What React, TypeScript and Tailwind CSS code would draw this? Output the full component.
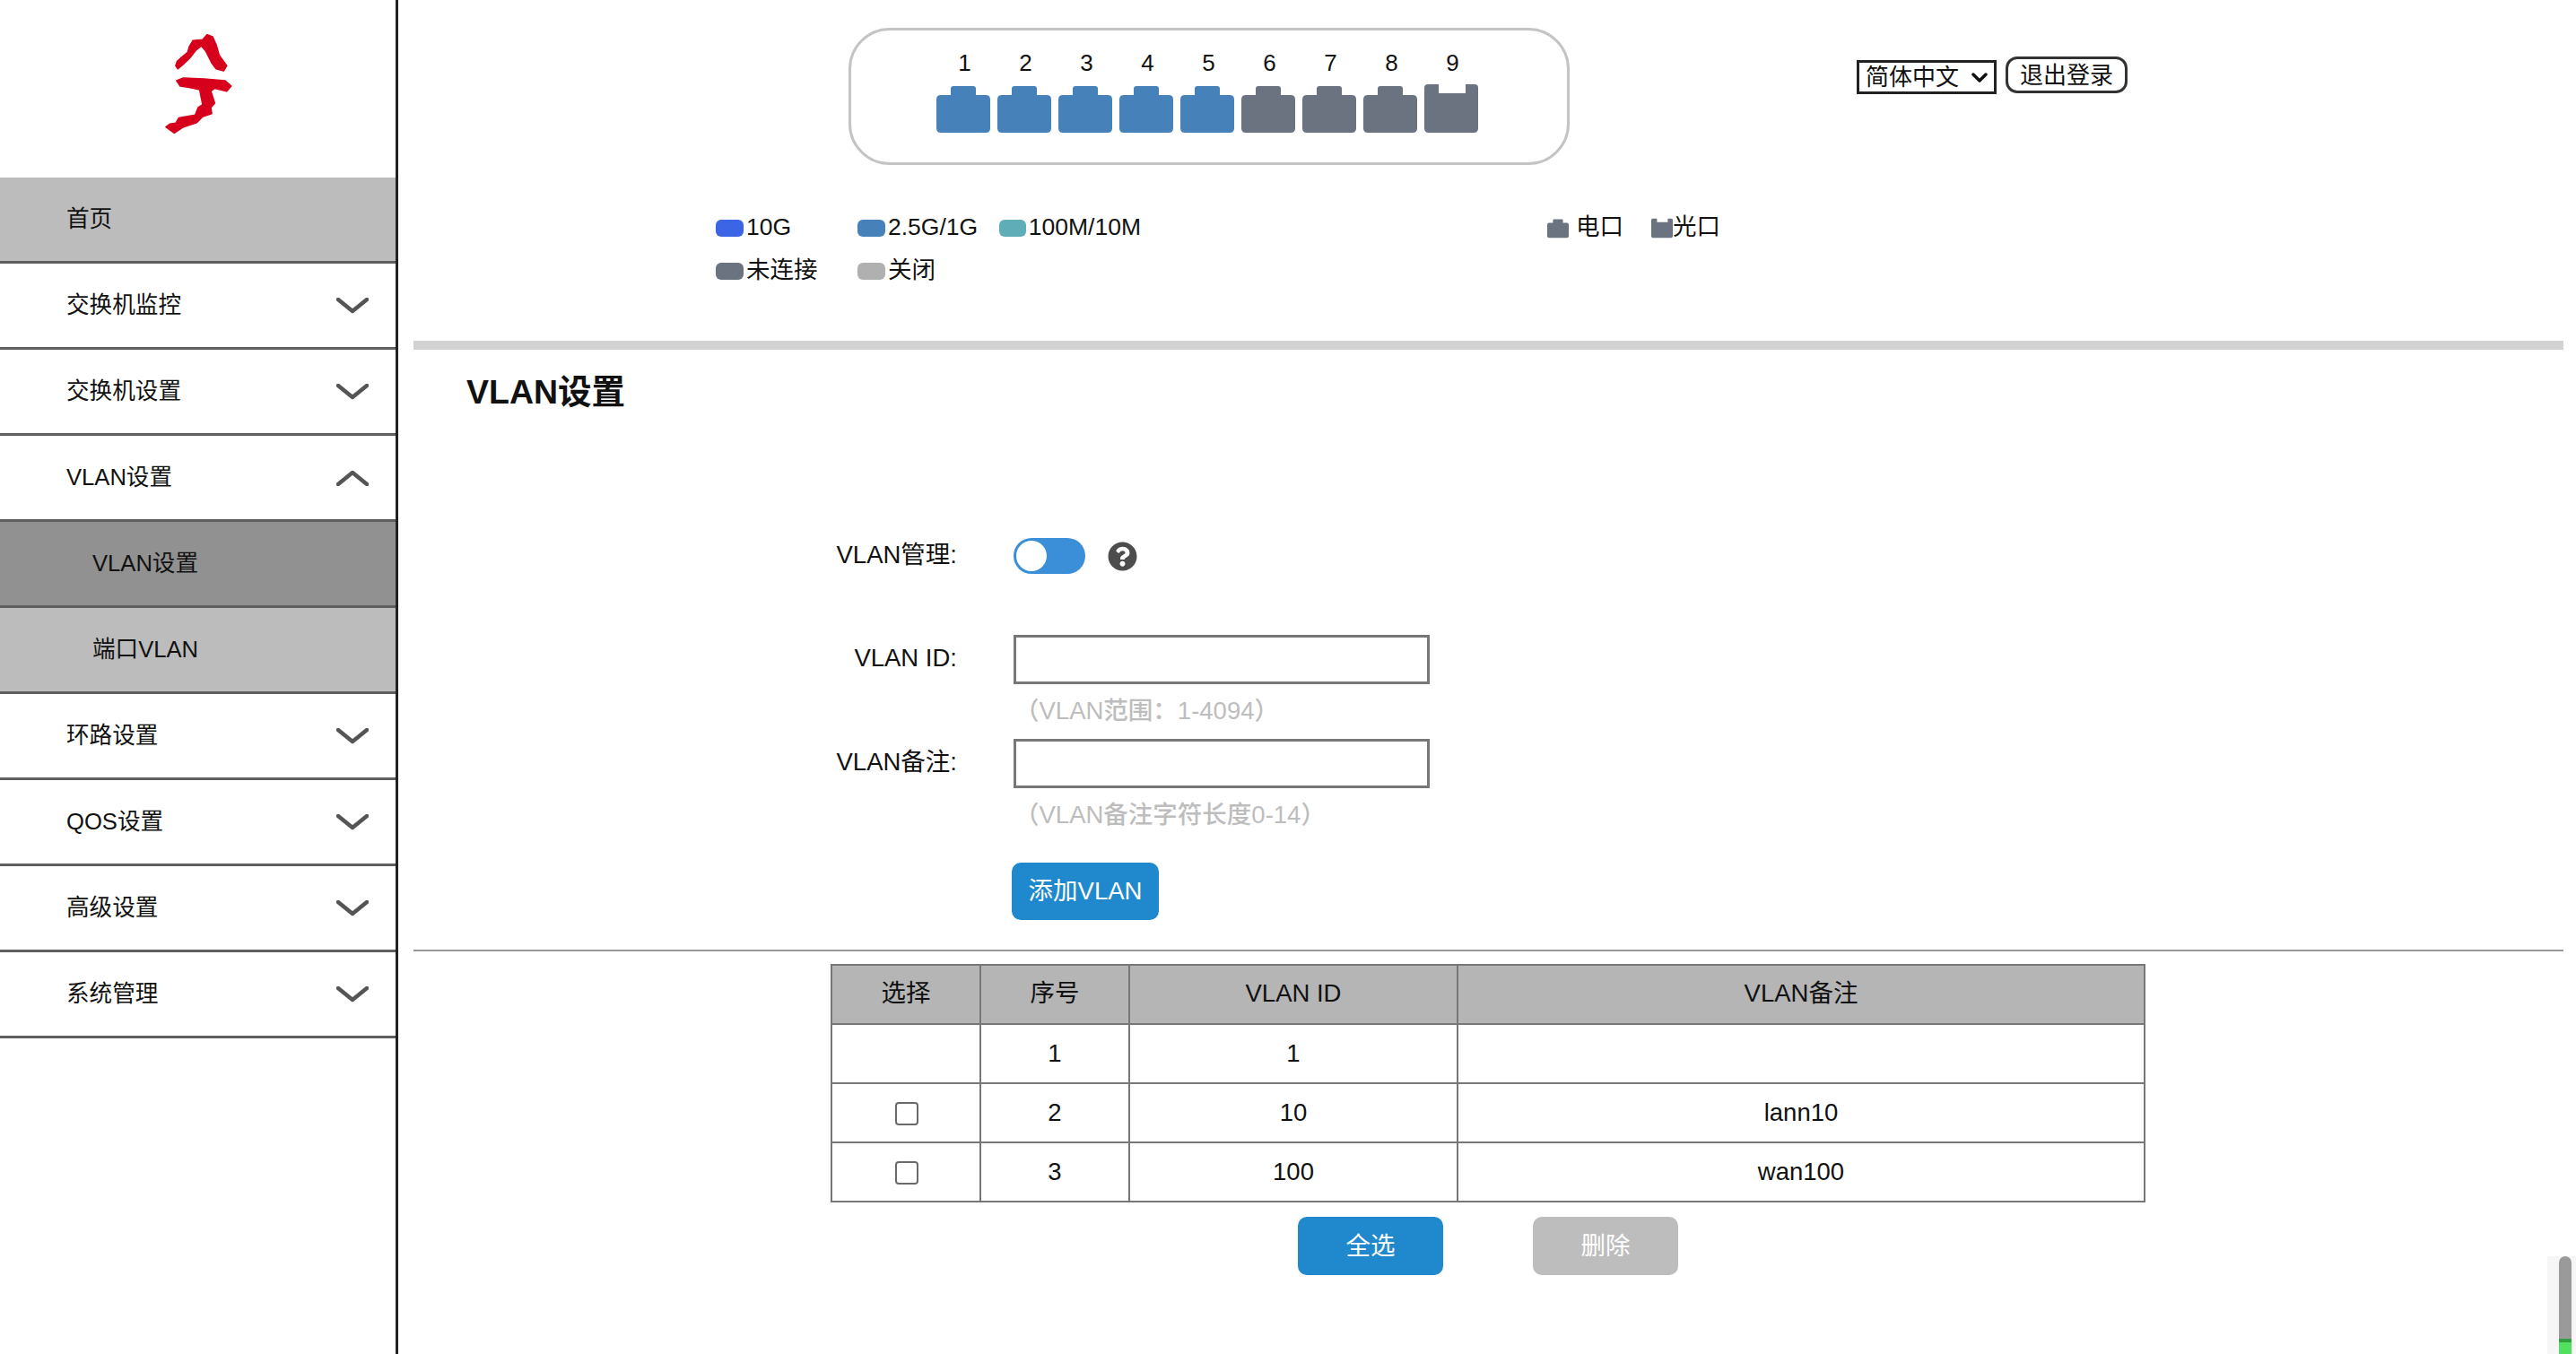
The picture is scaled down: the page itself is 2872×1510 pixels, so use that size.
import { FaQuestionCircle } from "react-icons/fa"

const menu = [
  { label: "首页", home: true },
  { label: "交换机监控" },
  { label: "交换机设置" },
  { label: "VLAN设置", open: true },
  { label: "VLAN设置", sub: true, active: true },
  { label: "端口VLAN", sub: true },
  { label: "环路设置" },
  { label: "QOS设置" },
  { label: "高级设置" },
  { label: "系统管理" },
]

const ports = [1, 2, 3, 4, 5, 6, 7, 8, 9]

const vlans = [
  { no: 1, id: 1, note: "", locked: true },
  { no: 2, id: 10, note: "lann10" },
  { no: 3, id: 100, note: "wan100" },
]

function Logo() {
  return (
    <svg width="120" height="140" viewBox="0 0 360 420" fill="#d6001c" stroke="#d6001c" strokeWidth="5" strokeLinejoin="round">
      <path d="M105 160 L110 145 L125 132 L145 115 L150 97 L162 76 L195 73 L210 56 L228 63 L240 90 L250 125 L275 160 L265 177 L240 170 L225 150 L205 110 L190 93 L170 110 L155 130 L130 155 L112 170 Z" />
      <path d="M108 210 L130 201 L200 204 L270 210 L290 228 L275 245 L235 235 L222 245 L235 285 L222 300 L225 320 L195 330 L175 350 L130 365 L100 385 L72 365 L85 355 L105 352 L115 335 L170 325 L180 300 L195 290 L185 240 L150 232 L120 228 Z" />
    </svg>
  )
}

function Chevron({ up }: { up?: boolean }) {
  return (
    <svg width="36" height="18" viewBox="0 0 36 18" fill="none" stroke="#555555" strokeWidth="4.5" strokeLinecap="round" strokeLinejoin="round">
      <path d={up ? "M2 16 L18 3 L34 16" : "M2 2 L18 15 L34 2"} />
    </svg>
  )
}

function CopperPort({ color, className }: { color: string; className: string }) {
  return (
    <svg className={className} viewBox="0 0 60 54" fill={color}>
      <path d="M19 2 H41 Q44 2 44 5 V12 H55 Q60 12 60 17 V49 Q60 54 55 54 H5 Q0 54 0 49 V17 Q0 12 5 12 H16 V5 Q16 2 19 2 Z" />
    </svg>
  )
}

function FiberPort({ color, className }: { color: string; className: string }) {
  return (
    <svg className={className} viewBox="0 0 60 54" fill={color}>
      <path d="M4 0 H16 V10 H46 V0 H56 Q60 0 60 4 V49 Q60 54 55 54 H5 Q0 54 0 49 V4 Q0 0 4 0 Z" />
    </svg>
  )
}

function Swatch({ color, label }: { color: string; label: string }) {
  return (
    <div className="flex items-center gap-[3px]">
      <span className="h-[19px] w-[31px] rounded-[6px]" style={{ backgroundColor: color }} />
      <span>{label}</span>
    </div>
  )
}

function Sidebar() {
  return (
    <aside className="flex h-full w-[444px] shrink-0 flex-col border-r-[3px] border-[#222222] text-[25.6px] text-[#111111]">
      <div className="flex h-[198px] justify-center pt-[20px]">
        <Logo />
      </div>
      {menu.map((item, i) => (
        <div
          key={i}
          className={`flex h-[96px] items-center justify-between border-b-[3px] border-[#5f5f5f] pr-[30px] ${
            item.sub ? "pl-[103px]" : "pl-[74px]"
          } ${item.active ? "bg-[#919191]" : item.sub || item.home ? "bg-[#bcbcbc]" : "bg-white"}`}
        >
          <span>{item.label}</span>
          {!item.sub && !item.home && <Chevron up={item.open} />}
        </div>
      ))}
    </aside>
  )
}

function Header() {
  return (
    <div className="h-[380px]">
      <div className="flex items-start pl-[485px] pt-[31px]">
        <div className="h-[153px] w-[804px] rounded-[46px] border-[3px] border-[#c4c4c4] pl-[95px] pt-[21px]">
          <div className="flex gap-[8px]">
            {ports.map((p) => (
              <div key={p} className="flex w-[60px] flex-col items-center">
                <span className="h-[30px] pl-[3px] text-[26px] leading-[30px]">{p}</span>
                <div className="mt-[9px]">
                  {p === 9 ? (
                    <FiberPort color="#6b7280" className="h-[54px] w-[60px]" />
                  ) : (
                    <CopperPort color={p <= 5 ? "#4682b9" : "#6b7280"} className="h-[54px] w-[60px]" />
                  )}
                </div>
              </div>
            ))}
          </div>
        </div>
        <div className="relative ml-[320px] mt-[36px]">
          <select className="h-[38px] w-[156px] appearance-none border-[3px] border-[#222222] bg-white pl-[7px] text-[26px] leading-none">
            <option>简体中文</option>
          </select>
          <svg className="pointer-events-none absolute right-[10px] top-[14px]" width="18" height="11" viewBox="0 0 18 11" fill="none" stroke="#111111" strokeWidth="3.5" strokeLinecap="round" strokeLinejoin="round">
            <path d="M2 2 L9 9 L16 2" />
          </svg>
        </div>
        <button className="ml-[10px] mt-[32px] h-[41px] w-[136px] rounded-[13px] border-[3px] border-[#333333] bg-white text-[26px] leading-none">
          退出登录
        </button>
      </div>
      <div className="ml-[337px] mt-[46px] flex text-[26.5px]">
        <div className="grid w-[927px] grid-cols-[158px_158px_158px] auto-rows-[48px] items-center">
          <Swatch color="#3c65e6" label="10G" />
          <Swatch color="#4682b9" label="2.5G/1G" />
          <Swatch color="#5fadb6" label="100M/10M" />
          <Swatch color="#6b7280" label="未连接" />
          <Swatch color="#b0b0b0" label="关闭" />
        </div>
        <div className="flex h-[48px] items-center">
          <CopperPort color="#6b7280" className="h-[23px] w-[24px]" />
          <span className="ml-[8px]">电口</span>
          <FiberPort color="#6b7280" className="ml-[31px] h-[23px] w-[24px]" />
          <span>光口</span>
        </div>
      </div>
    </div>
  )
}

function Field({ label, hint }: { label: string; hint: string }) {
  return (
    <>
      <div className="flex h-[55px] items-center">
        <label className="w-[606px] pb-[4px] text-right">{label}</label>
        <input className="ml-[63px] h-[55px] w-[464px] border-[3px] border-[#777777] bg-white" />
      </div>
      <div className="ml-[670px] mt-[15px] h-[30px] font-medium leading-[30px] text-[#bdbdbd]">{hint}</div>
    </>
  )
}

function VlanForm() {
  return (
    <div className="text-[27.5px] text-[#111111]">
      <div className="mt-[140px] flex h-[40px] items-center">
        <label className="w-[606px] pb-[2px] text-right">VLAN管理:</label>
        <div className="ml-[63px] flex h-[40px] w-[80px] items-center rounded-full bg-[#3b8ed8] pl-[3px]">
          <span className="h-[34px] w-[34px] rounded-full bg-white" />
        </div>
        <FaQuestionCircle className="ml-[25px] text-[33px] text-[#4d4d4d]" />
      </div>
      <div className="mt-[68px]">
        <Field label="VLAN ID:" hint="（VLAN范围：1-4094）" />
      </div>
      <div className="mt-[16px]">
        <Field label="VLAN备注:" hint="（VLAN备注字符长度0-14）" />
      </div>
      <button className="ml-[667px] mt-[38px] h-[64px] w-[164px] rounded-[10px] bg-[#2089cd] text-white">添加VLAN</button>
    </div>
  )
}

function VlanTable() {
  const cell = "border-2 border-[#777777] text-center font-normal"
  return (
    <div className="ml-[465px] mt-[14px] text-[27.5px] text-[#111111]">
      <table className="w-[1464px] table-fixed border-collapse">
        <colgroup>
          <col className="w-[166px]" />
          <col className="w-[166px]" />
          <col className="w-[366px]" />
          <col className="w-[766px]" />
        </colgroup>
        <thead>
          <tr className="h-[66px] bg-[#b5b5b5]">
            <th className={cell}>
              <span className="block pb-[2px]">选择</span>
            </th>
            <th className={cell}>
              <span className="block pb-[2px]">序号</span>
            </th>
            <th className={cell}>
              <span className="block pb-[2px]">VLAN ID</span>
            </th>
            <th className={cell}>
              <span className="block pb-[2px]">VLAN备注</span>
            </th>
          </tr>
        </thead>
        <tbody>
          {vlans.map((v) => (
            <tr key={v.no} className="h-[66px]">
              <td className={cell}>
                {!v.locked && (
                  <input
                    type="checkbox"
                    className="mb-[3px] ml-[2px] h-[26px] w-[26px] appearance-none rounded-[4px] border-2 border-[#6a6a6a] bg-white align-middle"
                  />
                )}
              </td>
              <td className={cell}>{v.no}</td>
              <td className={cell}>{v.id}</td>
              <td className={cell}>{v.note}</td>
            </tr>
          ))}
        </tbody>
      </table>
      <div className="ml-[521px] mt-[16px] flex gap-[100px]">
        <button className="h-[65px] w-[162px] rounded-[10px] bg-[#2089cd] text-white">全选</button>
        <button className="h-[65px] w-[162px] rounded-[10px] bg-[#bdbdbd] text-white">删除</button>
      </div>
    </div>
  )
}

export default function App() {
  return (
    <div className="relative flex h-[1510px] overflow-hidden bg-white font-['Liberation_Sans','Noto_Sans_CJK_SC',sans-serif] text-[#111111]">
      <Sidebar />
      <main className="flex-1 pl-[17px] pr-[14px]">
        <Header />
        <div className="h-[10px] bg-[#d2d2d2]" />
        <h1 className="ml-[59px] mt-[24px] h-[46px] text-[37.5px] font-bold leading-[46px]">VLAN设置</h1>
        <VlanForm />
        <div className="mt-[33px] h-[2px] bg-[#999999]" />
        <VlanTable />
      </main>
      <div className="absolute bottom-0 right-0 h-[109px] w-[32px] bg-[#f6f6f6]">
        <div className="absolute bottom-0 right-[5px] flex h-full w-[14px] flex-col justify-end overflow-hidden rounded-t-full bg-[#9a9a9a]">
          <div className="h-[17px] border-t-[4px] border-[#2f9e3e] bg-[#4fe05f]" />
        </div>
      </div>
    </div>
  )
}
